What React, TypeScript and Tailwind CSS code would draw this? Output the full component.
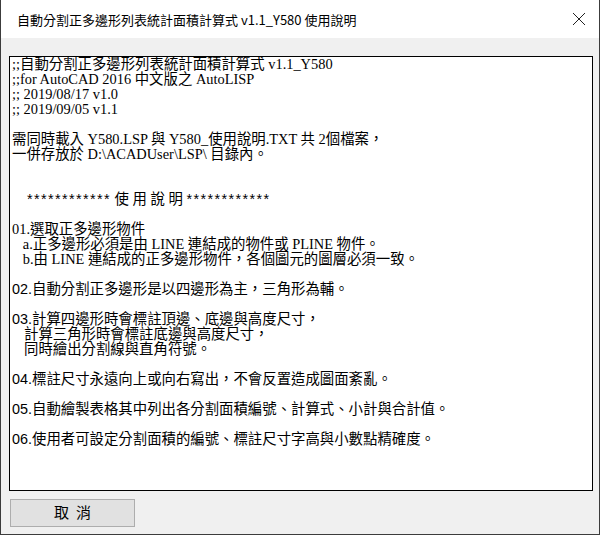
import React from "react";

const serif = { fontFamily: '"Liberation Serif", "Noto Sans CJK TC", serif' };
const sans = { fontFamily: '"Liberation Sans", "Noto Sans CJK TC", sans-serif' };

type L = { t: string; s?: "sans" | "serif" | "stars" };

const lines: L[] = [
  { t: ";;自動分割正多邊形列表統計面積計算式 v1.1_Y580" },
  { t: ";;for AutoCAD 2016 中文版之 AutoLISP" },
  { t: ";; 2019/08/17 v1.0" },
  { t: ";; 2019/09/05 v1.1" },
  { t: "" },
  { t: "需同時載入 Y580.LSP 與 Y580_使用說明.TXT 共 2個檔案，" },
  { t: "一併存放於 D:\\ACADUser\\LSP\\ 目錄內。" },
  { t: "" },
  { t: "" },
  { t: "", s: "stars" },
  { t: "" },
  { t: "01.選取正多邊形物件" },
  { t: "   a.正多邊形必須是由 LINE 連結成的物件或 PLINE 物件。" },
  { t: "   b.由 LINE 連結成的正多邊形物件，各個圖元的圖層必須一致。" },
  { t: "" },
  { t: "02.自動分割正多邊形是以四邊形為主，三角形為輔。", s: "sans" },
  { t: "" },
  { t: "03.計算四邊形時會標註頂邊、底邊與高度尺寸，", s: "sans" },
  { t: "   計算三角形時會標註底邊與高度尺寸，", s: "sans" },
  { t: "   同時繪出分割線與直角符號。", s: "sans" },
  { t: "" },
  { t: "04.標註尺寸永遠向上或向右寫出，不會反置造成圖面紊亂。", s: "sans" },
  { t: "" },
  { t: "05.自動繪製表格其中列出各分割面積編號、計算式、小計與合計值。", s: "sans" },
  { t: "" },
  { t: "06.使用者可設定分割面積的編號、標註尺寸字高與小數點精確度。", s: "sans" },
];

function Stars() {
  return (
    <span className="inline-block w-[84px] tracking-[1.4px]" style={sans}>
      ************
    </span>
  );
}

export default function App() {
  return (
    <div className="w-[600px] h-[535px] flex flex-col bg-[#f0f0f0] border-x border-b border-[#3c3c3c] overflow-hidden">
      <div className="h-[38px] shrink-0 bg-white flex items-center justify-between pl-[16px] pr-[13px]">
        <span
          className="text-[13px] text-black leading-none"
          style={{ fontFamily: '"Noto Sans CJK TC", "Noto Sans", sans-serif' }}
        >
          自動分割正多邊形列表統計面積計算式 v1.1_Y580 使用說明
        </span>
        <svg width="14" height="14" viewBox="0 0 14 14" className="text-[#222]">
          <path d="M1 1 L13 13 M13 1 L1 13" stroke="currentColor" strokeWidth="1" fill="none" />
        </svg>
      </div>
      <div className="flex-1 flex flex-col pl-[8px] pr-[6px] pt-[18px]">
        <div className="h-[435px] bg-white border border-black pl-[2px] pt-0 overflow-hidden">
          {lines.map((l, i) =>
            l.s === "stars" ? (
              <div
                key={i}
                className="h-[15px] leading-[15px] text-[14.4px] text-black whitespace-pre pl-[15px] flex items-center"
                style={serif}
              >
                <Stars />
                <span className="whitespace-pre"> 使 用 說 明 </span>
                <Stars />
              </div>
            ) : (
              <div
                key={i}
                className="h-[15px] leading-[15px] text-[14.4px] text-black whitespace-pre"
                style={l.s === "sans" ? sans : serif}
              >
                {l.t || " "}
              </div>
            )
          )}
        </div>
        <div className="mt-[8px] ml-[1px] w-[125px] h-[28px] border border-[#adadad] bg-[#e1e1e1] flex items-center justify-center gap-[7px] text-[15px] text-black" style={serif}>
          <span>取</span>
          <span>消</span>
        </div>
      </div>
    </div>
  );
}
